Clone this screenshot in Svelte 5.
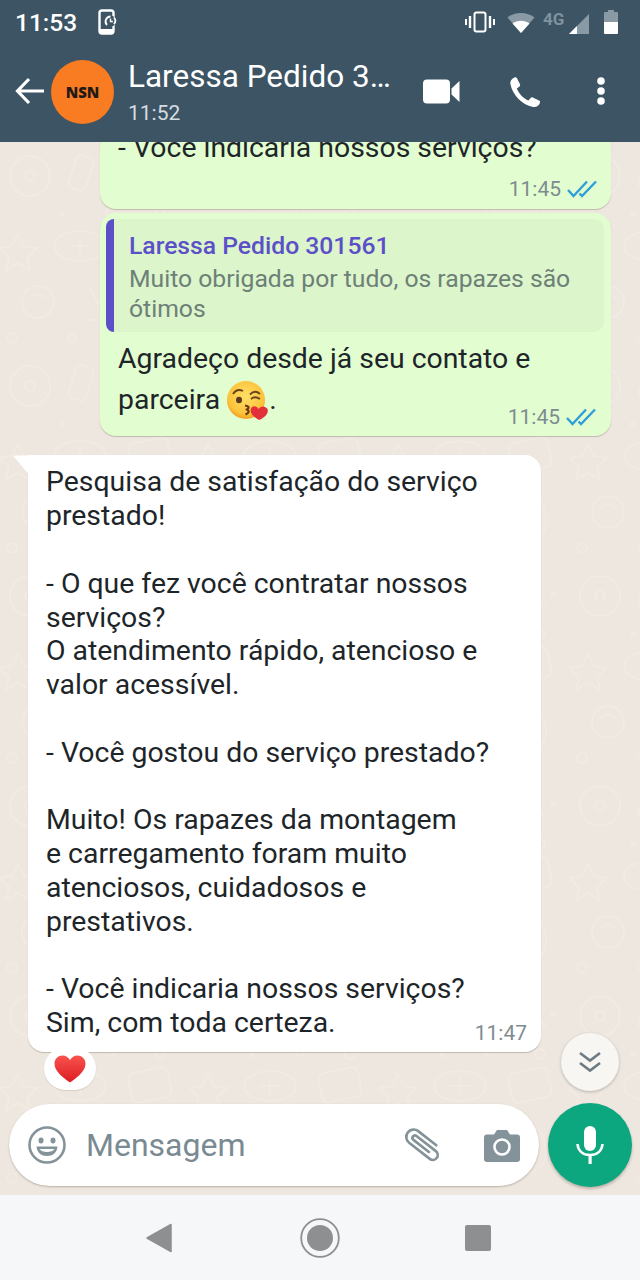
<script>
  const survey = `Pesquisa de satisfação do serviço
prestado!

- O que fez você contratar nossos
serviços?
O atendimento rápido, atencioso e
valor acessível.

- Você gostou do serviço prestado?

Muito! Os rapazes da montagem
e carregamento foram muito
atenciosos, cuidadosos e
prestativos.

- Você indicaria nossos serviços?
Sim, com toda certeza.`;
</script>

<div class="phone">
  <header>
    <div class="status">
      <span class="clock">11:53</span>
      <svg class="sync" width="20" height="26" viewBox="0 0 20 26">
        <rect x="1.500" y="1.500" width="14" height="23" rx="2.500" fill="none" stroke="#fff" stroke-width="2.400" />
        <rect x="2" y="20" width="13" height="4.500" fill="#fff" />
        <circle cx="12.500" cy="12" r="5.500" fill="#3c5464" />
        <path d="M9 16A5 5 0 0 1 12.500 7.500M16 8.500A5 5 0 0 1 16 15" fill="none" stroke="#fff" stroke-width="1.800" />
        <path d="M12.500 9.500v3h2.400" fill="none" stroke="#fff" stroke-width="1.400" />
      </svg>
      <div class="status-right">
        <svg width="30" height="22" viewBox="0 0 30 22">
          <rect x="9.500" y="1.500" width="11" height="19" rx="2" fill="none" stroke="#fff" stroke-width="2" />
          <path d="M5 5v12M25 5v12" stroke="#fff" stroke-width="2.400" />
          <path d="M1 8v6M29 8v6" stroke="#fff" stroke-width="2" />
        </svg>
        <svg class="wifi" width="28" height="22" viewBox="0 0 28 22">
          <path d="M0.500 6.500C8 0.500 20 0.500 27.500 6.500L14 22Z" fill="#8a9aa5" />
          <path d="M5.500 12.500C10.500 8.800 17.500 8.800 22.500 12.500L14 22Z" fill="#fff" />
        </svg>
        <span class="net">4G</span>
        <svg class="signal" width="20" height="20" viewBox="0 0 20 20">
          <path d="M0 20L20 0V20Z" fill="#8a9aa5" />
          <path d="M0 20L8 12V20Z" fill="#fff" />
        </svg>
        <svg class="battery" width="14" height="24" viewBox="0 0 14 24">
          <path d="M4 0h6v2h3a1 1 0 0 1 1 1v9H0V3a1 1 0 0 1 1-1h3Z" fill="#8a9aa5" />
          <path d="M0 12h14v11a1 1 0 0 1-1 1H1a1 1 0 0 1-1-1Z" fill="#fff" />
        </svg>
      </div>
    </div>
    <div class="toolbar">
      <svg class="back" width="30" height="28" viewBox="0 0 30 28">
        <path d="M29 14H3M14 2L2.500 14L14 26" fill="none" stroke="#fff" stroke-width="3.200" />
      </svg>
      <div class="avatar">NSN</div>
      <div class="who">
        <div class="name">Laressa Pedido 301561</div>
        <div class="seen">11:52</div>
      </div>
      <svg class="video" width="37" height="25" viewBox="0 0 37 25">
        <rect x="0" y="0.500" width="27" height="24" rx="4" fill="#fff" />
        <path d="M28.500 9.500L36.500 2V23L28.500 15.500Z" fill="#fff" />
      </svg>
      <svg class="call" width="32" height="32" viewBox="0 0 32 32">
        <path d="M5.500 1.500C2.500 2.800 0.800 5.500 1.500 8.500C3.800 19 12.500 28.500 24 31C27.500 31.500 30.500 29.500 31 26.500C31.200 25.500 30.800 24.800 30 24.400L23.800 21.500C23 21.100 22.200 21.300 21.600 22L19.500 24.600C14.500 22.500 9.800 17.500 7.800 12.500L10.500 10.500C11.100 9.900 11.300 9.100 11 8.300L8 2.200C7.600 1.400 6.400 1.100 5.500 1.500Z" fill="#fff" />
      </svg>
      <svg class="dots" width="8" height="28" viewBox="0 0 8 28">
        <circle cx="4" cy="4" r="3.800" fill="#fff" />
        <circle cx="4" cy="14" r="3.800" fill="#fff" />
        <circle cx="4" cy="24" r="3.800" fill="#fff" />
      </svg>
    </div>
  </header>

  <main>
    <svg class="wallpaper" width="640" height="1053" aria-hidden="true">
      <defs>
        <pattern id="doodles" width="190" height="210" patternUnits="userSpaceOnUse">
          <g fill="none" stroke="#f1ebe4" stroke-width="1.600">
            <circle cx="30" cy="34" r="20" />
            <circle cx="30" cy="34" r="5" />
            <rect x="72" y="14" width="18" height="34" rx="5" transform="rotate(18 81 31)" />
            <path d="M120 44Q140 8 165 44Z" />
            <circle cx="110" cy="70" r="4" />
            <circle cx="160" cy="72" r="5" />
            <path d="M18 92l6 12 13 2-10 9 3 13-12-7-12 7 3-13-10-9 13-2Z" />
            <ellipse cx="80" cy="104" rx="26" ry="15" />
            <path d="M70 104h20M80 95v18" />
            <rect x="130" y="88" width="40" height="30" rx="6" transform="rotate(-12 150 103)" />
            <circle cx="38" cy="160" r="16" />
            <path d="M30 156q8-7 16 0" />
            <path d="M90 146l8 16 18-26M84 178h34" />
            <path d="M140 140q24 2 26 26t-26 26q-14-26 0-52Z" />
            <circle cx="72" cy="196" r="4" />
            <circle cx="12" cy="196" r="5" />
            <path d="M170 30l5 5m0-5l-5 5M60 70l5 5m0-5l-5 5" />
          </g>
        </pattern>
      </defs>
      <rect width="640" height="1053" fill="url(#doodles)" />
    </svg>

    <div class="messages">
      <div class="bubble out first">
        <p class="text">- Você indicaria nossos serviços?</p>
        <div class="meta">
          <span>11:45</span>
          <svg width="30" height="18" viewBox="0 0 30 18">
            <path d="M1 10L6.500 16L20 1.500M12.500 13.500L15 16L29 1.500" fill="none" stroke="#2f9fd8" stroke-width="2.400" />
          </svg>
        </div>
      </div>

      <div class="bubble out second">
        <div class="quote">
          <div class="quote-name">Laressa Pedido 301561</div>
          <div class="quote-text">Muito obrigada por tudo, os rapazes são ótimos</div>
        </div>
        <p class="text reply">Agradeço desde já seu contato e
parceira <svg class="kiss" width="42" height="42" viewBox="0 0 42 42">
            <defs>
              <radialGradient id="face" cx="0.5" cy="0.4" r="0.62">
                <stop offset="0" stop-color="#ffdf66" />
                <stop offset="0.75" stop-color="#fcc33c" />
                <stop offset="1" stop-color="#f09a1e" />
              </radialGradient>
            </defs>
            <circle cx="19" cy="21" r="19" fill="url(#face)" />
            <ellipse cx="12" cy="21" rx="3" ry="3.300" fill="#5b3a1c" />
            <path d="M6 15Q10 9 16 12M23 15.500Q28 10.500 33 15M24 20Q28 16.500 33 20" fill="none" stroke="#6b431d" stroke-width="1.900" />
            <path d="M18 26.500Q24 27.500 20 30.500Q24 33 18.500 35.500" fill="none" stroke="#6b3a12" stroke-width="2.200" />
            <path d="M32 41C25 37 22.500 33 24 29.500C25.500 26.500 29.500 26.500 31.500 30C33.500 26.500 38.500 26.500 40.500 30C42 34 38 38.500 32 41Z" fill="#e2303a" />
          </svg>.</p>
        <div class="meta">
          <span>11:45</span>
          <svg width="30" height="18" viewBox="0 0 30 18">
            <path d="M1 10L6.500 16L20 1.500M12.500 13.500L15 16L29 1.500" fill="none" stroke="#2f9fd8" stroke-width="2.400" />
          </svg>
        </div>
      </div>

      <div class="bubble in">
        <span class="tail"></span>
        <p class="text">{survey}</p>
        <div class="meta"><span>11:47</span></div>
        <div class="reaction">
          <svg width="32" height="28" viewBox="0 0 32 28">
            <defs>
              <linearGradient id="heart" x1="0" y1="0" x2="0" y2="1">
                <stop offset="0" stop-color="#f8534f" />
                <stop offset="1" stop-color="#dc1c22" />
              </linearGradient>
            </defs>
            <path d="M16 27.500C6 20.500 0.500 15 0.500 8.500C0.500 3.500 4.500 0.500 8.500 0.500C11.800 0.500 14.500 2.300 16 5C17.500 2.300 20.200 0.500 23.500 0.500C27.500 0.500 31.500 3.500 31.500 8.500C31.500 15 26 20.500 16 27.500Z" fill="url(#heart)" />
          </svg>
        </div>
      </div>
    </div>

    <button class="scroll-down" aria-label="Ir para o fim">
      <svg width="24" height="22" viewBox="0 0 24 22">
        <path d="M2 2L12 9.500L22 2M2 12L12 19.500L22 12" fill="none" stroke="#6d7b84" stroke-width="2.600" />
      </svg>
    </button>

    <div class="composer">
      <div class="field">
        <svg class="smile" width="38" height="38" viewBox="0 0 38 38">
          <circle cx="19" cy="19" r="17.500" fill="none" stroke="#84929a" stroke-width="2.600" />
          <ellipse cx="13" cy="14.500" rx="2.500" ry="3" fill="#84929a" />
          <ellipse cx="25" cy="14.500" rx="2.500" ry="3" fill="#84929a" />
          <path d="M8.500 20.500H29.500C29 27 24.500 30 19 30C13.500 30 9 27 8.500 20.500Z" fill="#84929a" />
          <path d="M11.500 23H26.500C25.500 25 22.500 26 19 26C15.500 26 12.500 25 11.500 23Z" fill="#fff" />
        </svg>
        <span class="placeholder">Mensagem</span>
        <svg class="clip" width="38" height="34" viewBox="0 0 38 34">
          <g transform="translate(19 17) rotate(38) scale(0.82) translate(-26 -11)">
            <path d="M36 14H12A3 3 0 0 1 12 8H42A6 6 0 0 1 42 20H10A9 9 0 0 1 10 2H38" fill="none" stroke="#84929a" stroke-width="3.200" stroke-linecap="round" />
          </g>
        </svg>
        <svg class="camera" width="36" height="33" viewBox="0 0 36 33">
          <path d="M3 5.500H10L13 1H23L26 5.500H33A3 3 0 0 1 36 8.500V30A3 3 0 0 1 33 33H3A3 3 0 0 1 0 30V8.500A3 3 0 0 1 3 5.500Z" fill="#84929a" />
          <circle cx="18" cy="18" r="7.500" fill="#84929a" stroke="#fff" stroke-width="2.600" />
        </svg>
      </div>
      <button class="mic" aria-label="Gravar áudio">
        <svg width="28" height="38" viewBox="0 0 28 38">
          <rect x="8" y="0" width="12" height="25" rx="6" fill="#fff" />
          <path d="M1.500 18C2 25 7 29 14 29C21 29 26 25 26.500 18" fill="none" stroke="#fff" stroke-width="2.600" />
          <rect x="12.500" y="28" width="3.200" height="10" fill="#fff" />
        </svg>
      </button>
    </div>
  </main>

  <nav>
    <svg width="26" height="30" viewBox="0 0 26 30">
      <path d="M25 1.500V28.500L1 15Z" fill="#8e8f91" stroke="#8e8f91" stroke-width="1.500" stroke-linejoin="round" />
    </svg>
    <svg width="40" height="40" viewBox="0 0 40 40">
      <circle cx="20" cy="20" r="18.800" fill="none" stroke="#8e8f91" stroke-width="1.800" />
      <circle cx="20" cy="20" r="13" fill="#8e8f91" />
    </svg>
    <span class="square"></span>
  </nav>
</div>

<style>
  :global(body) {
    margin: 0;
    background: #eee7df;
  }

  .phone {
    width: 640px;
    height: 1280px;
    display: flex;
    flex-direction: column;
    overflow: hidden;
    font-family: Roboto, "Liberation Sans", sans-serif;
  }

  header {
    height: 142px;
    flex: none;
    background: #3c5464;
    color: #fff;
    position: relative;
    z-index: 2;
  }

  .status {
    height: 44px;
    display: flex;
    align-items: center;
    padding: 0 22px 0 15px;
  }

  .clock {
    font-size: 24.500px;
    font-weight: 500;
    margin-top: 1px;
  }

  .sync {
    margin-left: 21px;
  }

  .status-right {
    margin-left: auto;
    display: flex;
    align-items: center;
  }

  .wifi {
    margin-left: 12px;
  }

  .net {
    margin-left: 8px;
    width: 26px;
    font-size: 17px;
    font-weight: 700;
    color: #7f929f;
    margin-top: -6px;
  }

  .signal {
    margin-top: 4px;
  }

  .battery {
    margin-left: 15px;
  }

  .toolbar {
    height: 94px;
    display: flex;
    align-items: center;
    padding-left: 15px;
  }

  .back {
    flex: none;
  }

  .avatar {
    flex: none;
    width: 63px;
    height: 64px;
    margin-left: 6px;
    margin-top: 1px;
    border-radius: 50%;
    background: #f97b22;
    color: #1f1a17;
    font-family: "Open Sans", sans-serif;
    font-size: 15px;
    font-weight: 800;
    display: flex;
    align-items: center;
    justify-content: center;
  }

  .who {
    width: 270px;
    margin-left: 14px;
    margin-top: 2px;
  }

  .name {
    font-size: 31.500px;
    line-height: 36px;
    white-space: nowrap;
    overflow: hidden;
    text-overflow: ellipsis;
  }

  .seen {
    font-size: 21px;
    line-height: 24px;
    color: #d5dce1;
    margin-top: 6px;
  }

  .video {
    margin-left: 25px;
  }

  .call {
    margin-left: 49px;
    margin-top: 1px;
  }

  .dots {
    margin-left: 56px;
  }

  main {
    position: relative;
    flex: 1;
    min-height: 0;
    display: flex;
    flex-direction: column;
    overflow: hidden;
    background: #eee7df;
  }

  .wallpaper {
    position: absolute;
    inset: 0;
  }

  .messages {
    position: relative;
    flex: 1;
    min-height: 0;
    display: flex;
    flex-direction: column;
    justify-content: flex-end;
    padding-bottom: 52px;
  }

  .bubble {
    flex: none;
    position: relative;
    box-sizing: border-box;
    border-radius: 16px;
    box-shadow: 0 1px 1px rgba(90, 75, 60, 0.3);
  }

  .out {
    width: 511px;
    margin-left: 100px;
    background: #e2fdd0;
  }

  .first {
    padding: 0 14px 0 18px;
    margin-bottom: 4px;
  }

  .second {
    padding: 6px 7px 0 6px;
    margin-bottom: 19px;
  }

  .in {
    width: 513px;
    margin-left: 28px;
    padding: 10px 14px 0 18px;
    background: #fff;
    border-top-left-radius: 0;
  }

  .tail {
    position: absolute;
    left: -15px;
    top: 0;
    width: 15px;
    height: 18px;
    background: #fff;
    clip-path: polygon(0 0, 100% 0, 100% 100%);
    border-top-left-radius: 3px;
  }

  .text {
    margin: 0;
    font-size: 28.400px;
    line-height: 33.800px;
    color: #1d2529;
    white-space: pre-line;
  }

  .reply {
    padding: 6px 12px 0;
    line-height: 41px;
  }

  .kiss {
    vertical-align: -12px;
  }

  .meta {
    display: flex;
    align-items: center;
    justify-content: flex-end;
    gap: 6px;
    height: 24px;
    color: #7e8c90;
    font-size: 21px;
  }

  .first .meta {
    margin-top: 13px;
    padding-bottom: 8px;
  }

  .second .meta {
    margin-top: -16px;
    padding: 0 8px 7px 0;
  }

  .in .meta {
    margin-top: -19px;
    padding-bottom: 7px;
  }

  .quote {
    height: 113px;
    box-sizing: border-box;
    padding: 12px 24px 0 15px;
    border-radius: 10px;
    background: #dcf5cb;
    border-left: 8px solid #5b50c8;
    border-top-left-radius: 8px;
    border-bottom-left-radius: 8px;
  }

  .quote-name {
    font-size: 24.700px;
    font-weight: 500;
    line-height: 29px;
    color: #5b50c8;
  }

  .quote-text {
    font-size: 24.700px;
    line-height: 29.500px;
    margin-top: 4px;
    color: #6d8078;
  }

  .reaction {
    position: absolute;
    left: 16px;
    bottom: -38px;
    width: 52px;
    height: 43px;
    border-radius: 22px;
    background: #fff;
    display: flex;
    align-items: center;
    justify-content: center;
    box-shadow: 0 1px 1px rgba(90, 75, 60, 0.15);
  }

  .scroll-down {
    position: absolute;
    left: 561px;
    top: 891px;
    width: 58px;
    height: 58px;
    padding: 0;
    border: 0;
    border-radius: 50%;
    background: #f7f6f3;
    display: flex;
    align-items: center;
    justify-content: center;
    box-shadow: 0 1px 3px rgba(60, 50, 40, 0.3);
  }

  .composer {
    position: relative;
    flex: none;
    display: flex;
    align-items: center;
    height: 82px;
    padding: 0 8px 9px 9px;
  }

  .field {
    width: 530px;
    height: 82px;
    box-sizing: border-box;
    border-radius: 41px;
    background: #fff;
    display: flex;
    align-items: center;
    padding-left: 19px;
    box-shadow: 0 1px 2px rgba(90, 75, 60, 0.35);
  }

  .placeholder {
    margin-left: 20px;
    font-size: 32px;
    color: #7a8a92;
  }

  .clip {
    margin-left: auto;
    overflow: visible;
  }

  .camera {
    margin-left: 41px;
    margin-right: 19px;
  }

  .mic {
    width: 84px;
    height: 84px;
    margin-left: 9px;
    padding: 0;
    border: 0;
    border-radius: 50%;
    background: #0ca67f;
    display: flex;
    align-items: center;
    justify-content: center;
    box-shadow: 0 2px 3px rgba(60, 50, 40, 0.3);
  }

  nav {
    height: 85px;
    flex: none;
    background: #f5f7f9;
    display: grid;
    grid-template-columns: 26px 40px 26px;
    justify-content: center;
    column-gap: 128px;
    align-items: center;
  }

  nav svg {
    display: block;
  }

  .square {
    width: 26px;
    height: 26px;
    margin-left: -3px;
    border-radius: 2px;
    background: #8e8f91;
  }
</style>
